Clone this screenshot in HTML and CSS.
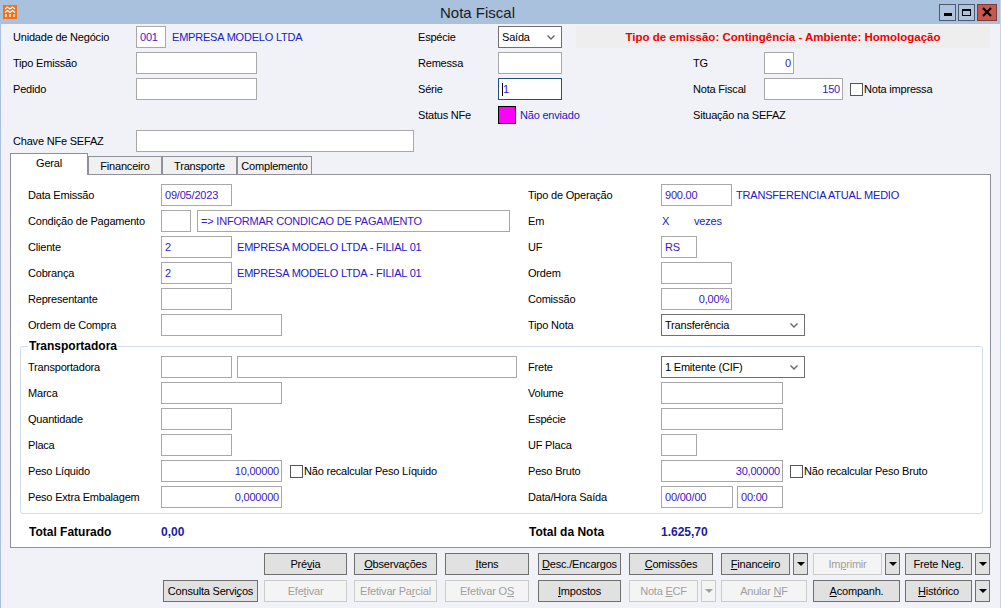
FILE: index.html
```html
<!DOCTYPE html>
<html lang="pt-BR">
<head>
<meta charset="utf-8">
<title>Nota Fiscal</title>
<link rel="stylesheet" href="styles.css">
</head>
<body>
<div class="window">
  <div class="titlebar">
    <span class="app-icon">
      <svg width="14" height="14" viewBox="0 0 14 14">
        <rect x="0" y="0" width="14" height="14" fill="#f0721e"/>
        <path d="M2 4 L4.5 2 L7 4 L9.5 2 L12 4 M2 7.5 L4.5 5.5 L7 7.5 L9.5 5.5 L12 7.5 M3 12 L3 9 M7 12 L7 9 M11 12 L11 9" stroke="#fff" stroke-width="1.3" fill="none"/>
      </svg>
    </span>
    <div class="title">Nota Fiscal</div>
    <div class="controls">
      <span class="ctl"><i class="bar"></i></span>
      <span class="ctl"><i class="box"></i></span>
      <span class="ctl close">
        <svg width="12" height="10" viewBox="0 0 12 10"><path d="M2 1 L10 9 M10 1 L2 9" stroke="#000" stroke-width="2.2"/></svg>
      </span>
    </div>
  </div>

  <div class="header">
    <div class="lbl">Unidade de Negócio</div>
    <div class="cell"><div class="inp w30">001</div><span class="desc ml6">EMPRESA MODELO LTDA</span></div>
    <div class="lbl">Espécie</div>
    <div class="cell span3">
      <div class="select w64"><span>Saída</span><svg class="chev" width="8" height="5" viewBox="0 0 8 5"><path d="M0.5 0.5 L4 4 L7.5 0.5" stroke="#666" stroke-width="1.4" fill="none"/></svg></div>
      <div class="banner">Tipo de emissão: Contingência - Ambiente: Homologação</div>
    </div>

    <div class="lbl">Tipo Emissão</div>
    <div class="cell"><div class="inp w121"></div></div>
    <div class="lbl">Remessa</div>
    <div class="cell"><div class="inp w64"></div></div>
    <div class="lbl">TG</div>
    <div class="cell"><div class="inp w30 num">0</div></div>

    <div class="lbl">Pedido</div>
    <div class="cell"><div class="inp w121"></div></div>
    <div class="lbl">Série</div>
    <div class="cell"><div class="inp w64 focus"><span class="caret"></span>1</div></div>
    <div class="lbl">Nota Fiscal</div>
    <div class="cell"><div class="inp w79 num">150</div><span class="check ml7"></span><span class="chk-lbl">Nota impressa</span></div>

    <div class="lbl"></div>
    <div class="cell"></div>
    <div class="lbl">Status NFe</div>
    <div class="cell"><span class="status-box"></span><span class="desc ml4">Não enviado</span></div>
    <div class="lbl">Situação na SEFAZ</div>
    <div class="cell"></div>

    <div class="lbl">Chave NFe SEFAZ</div>
    <div class="cell"><div class="inp w278"></div></div>
  </div>

  <div class="tabs">
    <div class="tab active">Geral</div>
    <div class="tab t74">Financeiro</div>
    <div class="tab t75">Transporte</div>
    <div class="tab t75">Complemento</div>
  </div>

  <div class="panel">
    <div class="form main-form">
      <div class="lbl">Data Emissão</div>
      <div class="cell"><div class="inp w71">09/05/2023</div></div>
      <div class="lbl">Tipo de Operação</div>
      <div class="cell"><div class="inp w71">900.00</div><span class="desc ml4">TRANSFERENCIA ATUAL MEDIO</span></div>

      <div class="lbl">Condição de Pagamento</div>
      <div class="cell"><div class="inp w30"></div><div class="inp w313 ml6">=&gt; INFORMAR CONDICAO DE PAGAMENTO</div></div>
      <div class="lbl">Em</div>
      <div class="cell"><span class="desc x-col">X</span><span class="desc">vezes</span></div>

      <div class="lbl">Cliente</div>
      <div class="cell"><div class="inp w71">2</div><span class="desc ml5">EMPRESA MODELO LTDA - FILIAL 01</span></div>
      <div class="lbl">UF</div>
      <div class="cell"><div class="inp w36">RS</div></div>

      <div class="lbl">Cobrança</div>
      <div class="cell"><div class="inp w71">2</div><span class="desc ml5">EMPRESA MODELO LTDA - FILIAL 01</span></div>
      <div class="lbl">Ordem</div>
      <div class="cell"><div class="inp w71"></div></div>

      <div class="lbl">Representante</div>
      <div class="cell"><div class="inp w71"></div></div>
      <div class="lbl">Comissão</div>
      <div class="cell"><div class="inp w71 num">0,00%</div></div>

      <div class="lbl">Ordem de Compra</div>
      <div class="cell"><div class="inp w121"></div></div>
      <div class="lbl">Tipo Nota</div>
      <div class="cell"><div class="select w144"><span>Transferência</span><svg class="chev" width="8" height="5" viewBox="0 0 8 5"><path d="M0.5 0.5 L4 4 L7.5 0.5" stroke="#666" stroke-width="1.4" fill="none"/></svg></div></div>
    </div>

    <fieldset class="group">
      <legend>Transportadora</legend>
      <div class="form">
        <div class="lbl">Transportadora</div>
        <div class="cell"><div class="inp w71"></div><div class="inp w280 ml5"></div></div>
        <div class="lbl">Frete</div>
        <div class="cell"><div class="select w144"><span>1 Emitente (CIF)</span><svg class="chev" width="8" height="5" viewBox="0 0 8 5"><path d="M0.5 0.5 L4 4 L7.5 0.5" stroke="#666" stroke-width="1.4" fill="none"/></svg></div></div>

        <div class="lbl">Marca</div>
        <div class="cell"><div class="inp w121"></div></div>
        <div class="lbl">Volume</div>
        <div class="cell"><div class="inp w122"></div></div>

        <div class="lbl">Quantidade</div>
        <div class="cell"><div class="inp w71"></div></div>
        <div class="lbl">Espécie</div>
        <div class="cell"><div class="inp w122"></div></div>

        <div class="lbl">Placa</div>
        <div class="cell"><div class="inp w71"></div></div>
        <div class="lbl">UF Placa</div>
        <div class="cell"><div class="inp w36"></div></div>

        <div class="lbl">Peso Líquido</div>
        <div class="cell"><div class="inp w121 num">10,00000</div><span class="check ml8"></span><span class="chk-lbl">Não recalcular Peso Líquido</span></div>
        <div class="lbl">Peso Bruto</div>
        <div class="cell"><div class="inp w122 num">30,00000</div><span class="check ml7"></span><span class="chk-lbl">Não recalcular Peso Bruto</span></div>

        <div class="lbl">Peso Extra Embalagem</div>
        <div class="cell"><div class="inp w121 num">0,000000</div></div>
        <div class="lbl">Data/Hora Saída</div>
        <div class="cell"><div class="inp w72">00/00/00</div><div class="inp w46 ml4">00:00</div></div>
      </div>
    </fieldset>

    <div class="form totals">
      <div class="lbl">Total Faturado</div>
      <div class="cell total-val">0,00</div>
      <div class="lbl">Total da Nota</div>
      <div class="cell total-val">1.625,70</div>
    </div>
  </div>

  <div class="buttons">
    <div class="bcell"></div>
    <div class="bcell"><span class="btn b83"><span>Pré<u>v</u>ia</span></span></div>
    <div class="bcell"><span class="btn b83"><span><u>O</u>bservações</span></span></div>
    <div class="bcell"><span class="btn b84"><span><u>I</u>tens</span></span></div>
    <div class="bcell"><span class="btn b83"><span><u>D</u>esc./Encargos</span></span></div>
    <div class="bcell"><span class="btn b84"><span><u>C</u>omissões</span></span></div>
    <div class="bcell"><span class="btn b69"><span><u>F</u>inanceiro</span></span><span class="dd"><i></i></span></div>
    <div class="bcell"><span class="btn b69 dis"><span>Im<u>p</u>rimir</span></span><span class="dd"><i></i></span></div>
    <div class="bcell"><span class="btn b67"><span>Frete Ne<u>g</u>.</span></span><span class="dd"><i></i></span></div>

    <div class="bcell"><span class="btn b95"><span>Consulta Servi<u>ç</u>os</span></span></div>
    <div class="bcell"><span class="btn b83 dis"><span>Efe<u>t</u>ivar</span></span></div>
    <div class="bcell"><span class="btn b83 dis"><span>Efetivar Pa<u>r</u>cial</span></span></div>
    <div class="bcell"><span class="btn b84 dis"><span>Efetivar O<u>S</u></span></span></div>
    <div class="bcell"><span class="btn b83"><span><u>I</u>mpostos</span></span></div>
    <div class="bcell"><span class="btn b69 dis"><span>Nota <u>E</u>CF</span></span><span class="dd dis"><i></i></span></div>
    <div class="bcell"><span class="btn b86 dis"><span>Anular <u>N</u>F</span></span></div>
    <div class="bcell"><span class="btn b87"><span><u>A</u>companh.</span></span></div>
    <div class="bcell"><span class="btn b67"><span><u>H</u>istórico</span></span><span class="dd"><i></i></span></div>
  </div>
</div>
</body>
</html>
```

FILE: styles.css
```css
* { box-sizing: border-box; }
html, body { margin: 0; padding: 0; }
body {
  width: 1001px;
  height: 608px;
  overflow: hidden;
  font-family: "Liberation Sans", Arial, sans-serif;
  font-size: 11px;
  letter-spacing: -0.2px;
  color: #000;
  background: #f1f2f8;
}
.window {
  width: 1001px;
  height: 608px;
  background: #f1f2f8;
  border-left: 1px solid #a9c1dd;
  border-right: 1px solid #c3d2e6;
}

/* title bar */
.titlebar {
  height: 24px;
  background: #a9c1dd;
  display: flex;
  align-items: center;
  padding: 0 3px 0 2px;
}
.app-icon { width: 14px; height: 14px; display: flex; }
.title {
  flex: 1;
  text-align: center;
  font-size: 15px;
  letter-spacing: 0;
  color: #1b1b1b;
  padding-top: 1px;
}
.controls { display: flex; gap: 1px; }
.ctl {
  width: 17px;
  height: 17px;
  border: 1px solid #4d5a6c;
  background: #aec3de;
  display: flex;
  align-items: center;
  justify-content: center;
  margin-left: 1px;
}
.ctl .bar { display: block; width: 8px; height: 3px; background: #000; margin-top: 5px; }
.ctl .box { display: block; width: 9px; height: 7px; border: 1px solid #000; border-top-width: 2px; }
.ctl.close { width: 20px; background: #c8584d; border-color: #7d3b34; }

/* header grid */
.header {
  display: grid;
  grid-template-columns: 123px 282px 80px 195px 71px 1fr;
  grid-auto-rows: 22px;
  row-gap: 4px;
  padding: 2px 0 0 12px;
}
.lbl { display: flex; align-items: center; white-space: nowrap; }
.cell { display: flex; align-items: center; white-space: nowrap; }
.span3 { grid-column: span 3; }

.inp {
  height: 22px;
  border: 1px solid #a8a8a8;
  background: #fff;
  color: #3a17c8;
  padding: 0 2px 0 3px;
  display: flex;
  align-items: center;
  white-space: nowrap;
  overflow: hidden;
  flex: none;
}
.inp.num { justify-content: flex-end; padding-right: 2px; }
.inp.focus { border-color: #24507f; color: #3a17c8; padding-left: 3px; }
.caret { display: inline-block; width: 1px; height: 13px; background: #000; margin-right: 0; }

.w30 { width: 30px; }
.w36 { width: 36px; }
.w46 { width: 46px; }
.w64 { width: 64px; }
.w71 { width: 71px; }
.w72 { width: 72px; }
.w79 { width: 79px; }
.w121 { width: 121px; }
.w122 { width: 122px; }
.w144 { width: 144px; }
.w278 { width: 278px; }
.w280 { width: 280px; }
.w313 { width: 313px; }
.ml4 { margin-left: 4px; }
.ml5 { margin-left: 5px; }
.ml6 { margin-left: 6px; }
.ml7 { margin-left: 7px; }
.ml8 { margin-left: 8px; }

.desc { color: #2020c2; }
.x-col { width: 33px; padding-left: 1px; }

.select {
  height: 22px;
  border: 1px solid #707070;
  background: #fff;
  display: flex;
  align-items: center;
  justify-content: space-between;
  padding: 0 6px 0 3px;
  flex: none;
}
.chev { display: block; }

.banner {
  margin-left: 14px;
  width: 414px;
  height: 22px;
  background: #eeeeee;
  color: #f00000;
  font-weight: bold;
  font-size: 11.5px;
  letter-spacing: 0;
  display: flex;
  align-items: center;
  justify-content: center;
}

.check {
  width: 13px;
  height: 13px;
  border: 1px solid #555;
  background: #fff;
  flex: none;
}
.chk-lbl { margin-left: 1px; }

.status-box {
  width: 18px;
  height: 18px;
  background: #ff00ff;
  border: 1px solid #000;
  flex: none;
}

/* tabs */
.tabs {
  margin: 1px 0 0 9px;
  height: 21px;
  display: flex;
  align-items: flex-end;
}
.tab {
  height: 18px;
  border: 1px solid #8f9099;
  border-bottom: none;
  background: #f0f0f0;
  display: flex;
  align-items: center;
  justify-content: center;
  padding-top: 1px;
}
.tab.active {
  width: 78px;
  height: 22px;
  margin-bottom: -1px;
  background: #fff;
  position: relative;
  z-index: 1;
  padding-bottom: 4px;
}
.t74 { width: 74px; }
.t75 { width: 75px; }

/* panel */
.panel {
  margin-left: 9px;
  width: 981px;
  height: 374px;
  border: 1px solid #8f9099;
  background: #fff;
  padding-top: 9px;
}
.form {
  display: grid;
  grid-template-columns: 133px 367px 133px 1fr;
  grid-auto-rows: 22px;
  row-gap: 4px;
}
.main-form { margin-left: 17px; }

.group {
  margin: 3px 0 0 9px;
  width: 963px;
  padding: 3px 7px 5px 7px;
  border: 1px solid #d3dde8;
  border-radius: 3px;
  min-width: 0;
}
.group legend {
  font-weight: bold;
  font-size: 12px;
  letter-spacing: 0;
  line-height: 14px;
  padding: 0 1px;
}

.totals {
  margin: 7px 0 0 18px;
  font-weight: bold;
  font-size: 12px;
  letter-spacing: 0;
}
.total-val { color: #1c1c9e; margin-left: -1px; }

/* bottom buttons */
.buttons {
  display: grid;
  grid-template-columns: 101px 90px 91px 93px 91px 92px 92px 92px 84px;
  grid-auto-rows: 22px;
  row-gap: 5px;
  padding-left: 162px;
  margin-top: 5px;
}
.bcell { display: flex; align-items: stretch; }
.btn {
  height: 22px;
  border: 1px solid #6f6f6f;
  background: #e1e1e1;
  display: flex;
  align-items: center;
  justify-content: center;
  white-space: nowrap;
  color: #000;
  flex: none;
}
.btn.dis { border-color: #cbcbcb; background: #f4f4f4; color: #a0a0a0; }
.b67 { width: 67px; }
.b69 { width: 69px; }
.b83 { width: 83px; }
.b84 { width: 84px; }
.b86 { width: 86px; }
.b87 { width: 87px; }
.b95 { width: 95px; }
.dd {
  margin-left: 3px;
  width: 15px;
  height: 22px;
  border: 1px solid #6f6f6f;
  background: #e1e1e1;
  display: flex;
  align-items: center;
  justify-content: center;
  flex: none;
}
.dd i {
  display: block;
  width: 0;
  height: 0;
  border-left: 4px solid transparent;
  border-right: 4px solid transparent;
  border-top: 4px solid #000;
}
.dd.dis { border-color: #cbcbcb; background: #f4f4f4; }
.dd.dis i { border-top-color: #a0a0a0; }
```
